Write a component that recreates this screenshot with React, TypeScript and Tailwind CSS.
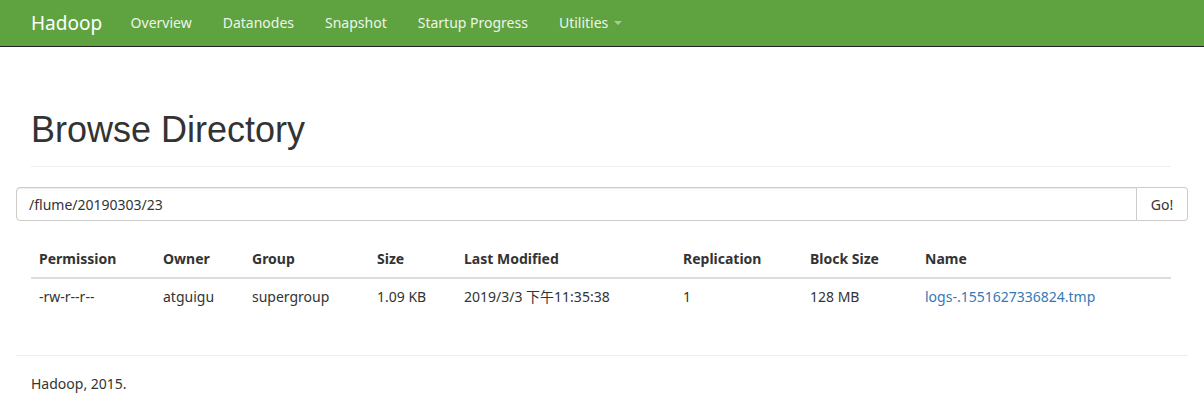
import React from 'react';

interface Entry {
    permission: string;
    owner: string;
    group: string;
    size: string;
    modified: string;
    replication: string;
    blockSize: string;
    name: string;
}

const columns = [
    { label: 'Permission', width: 'w-[124px]' },
    { label: 'Owner', width: 'w-[89px]' },
    { label: 'Group', width: 'w-[125px]' },
    { label: 'Size', width: 'w-[87px]' },
    { label: 'Last Modified', width: 'w-[219px]' },
    { label: 'Replication', width: 'w-[127px]' },
    { label: 'Block Size', width: 'w-[115px]' },
    { label: 'Name', width: '' },
];

const entries: Entry[] = [
    {
        permission: '-rw-r--r--',
        owner: 'atguigu',
        group: 'supergroup',
        size: '1.09 KB',
        modified: '2019/3/3 下午11:35:38',
        replication: '1',
        blockSize: '128 MB',
        name: 'logs-.1551627336824.tmp',
    },
];

const navLinks = ['Overview', 'Datanodes', 'Snapshot', 'Startup Progress'];

const App: React.FC = () => {
    return (
        <div className="min-h-[406px] bg-white text-[14px] text-[#333] font-['Noto_Sans','Noto_Sans_CJK_SC',sans-serif]">
            <nav className="h-[47px] bg-[#5fa341] border-b border-[#222] flex items-center px-[16px]">
                <a className="pl-[15px] pr-[13px] text-[19px] text-white leading-[20px]">Hadoop</a>
                {navLinks.map((link) => (
                    <a key={link} className="px-[15.5px] text-[#eef5ea] leading-[20px]">
                        {link}
                    </a>
                ))}
                <a className="px-[15.5px] text-[#eef5ea] leading-[20px] flex items-center">
                    Utilities
                    <span className="ml-[6px] w-0 h-0 border-x-[4px] border-x-transparent border-t-[4px] border-t-[#a9c99b]" />
                </a>
            </nav>

            <div className="px-[16px]">
                <div className="ml-[15px] mr-[17px] mt-[63px] pb-[16px] border-b border-[#eee]">
                    <h1 className="text-[36px] leading-[40px] font-['Liberation_Sans',Arial,sans-serif] text-[#333]">
                        Browse Directory
                    </h1>
                </div>

                <div className="mt-[20px] flex h-[34px]">
                    <div className="flex-1 border border-[#ccc] rounded-l-[4px] px-[12px] flex items-center shadow-[inset_0_1px_1px_rgba(0,0,0,0.075)]">
                        /flume/20190303/23
                    </div>
                    <button className="w-[51px] border border-l-0 border-[#ccc] rounded-r-[4px] bg-white">
                        Go!
                    </button>
                </div>

                <div className="ml-[15px] mr-[17px] mt-[20px] mb-[40px]">
                    <table className="w-full border-collapse table-fixed">
                        <thead>
                            <tr>
                                {columns.map((col) => (
                                    <th
                                        key={col.label}
                                        className={`${col.width} text-left font-bold p-[8px] leading-[20px] border-b-2 border-[#ddd]`}
                                    >
                                        {col.label}
                                    </th>
                                ))}
                            </tr>
                        </thead>
                        <tbody>
                            {entries.map((e) => (
                                <tr key={e.name}>
                                    <td className="p-[8px] leading-[20px]">{e.permission}</td>
                                    <td className="p-[8px] leading-[20px]">{e.owner}</td>
                                    <td className="p-[8px] leading-[20px]">{e.group}</td>
                                    <td className="p-[8px] leading-[20px]">{e.size}</td>
                                    <td className="p-[8px] leading-[20px]">{e.modified}</td>
                                    <td className="p-[8px] leading-[20px]">{e.replication}</td>
                                    <td className="p-[8px] leading-[20px]">{e.blockSize}</td>
                                    <td className="p-[8px] leading-[20px]">
                                        <a className="text-[#337ab7]">{e.name}</a>
                                    </td>
                                </tr>
                            ))}
                        </tbody>
                    </table>
                </div>

                <div className="border-t border-[#eee] pt-[18px] px-[15px]">
                    <p className="leading-[20px]">Hadoop, 2015.</p>
                </div>
            </div>
        </div>
    );
};

export default App;
